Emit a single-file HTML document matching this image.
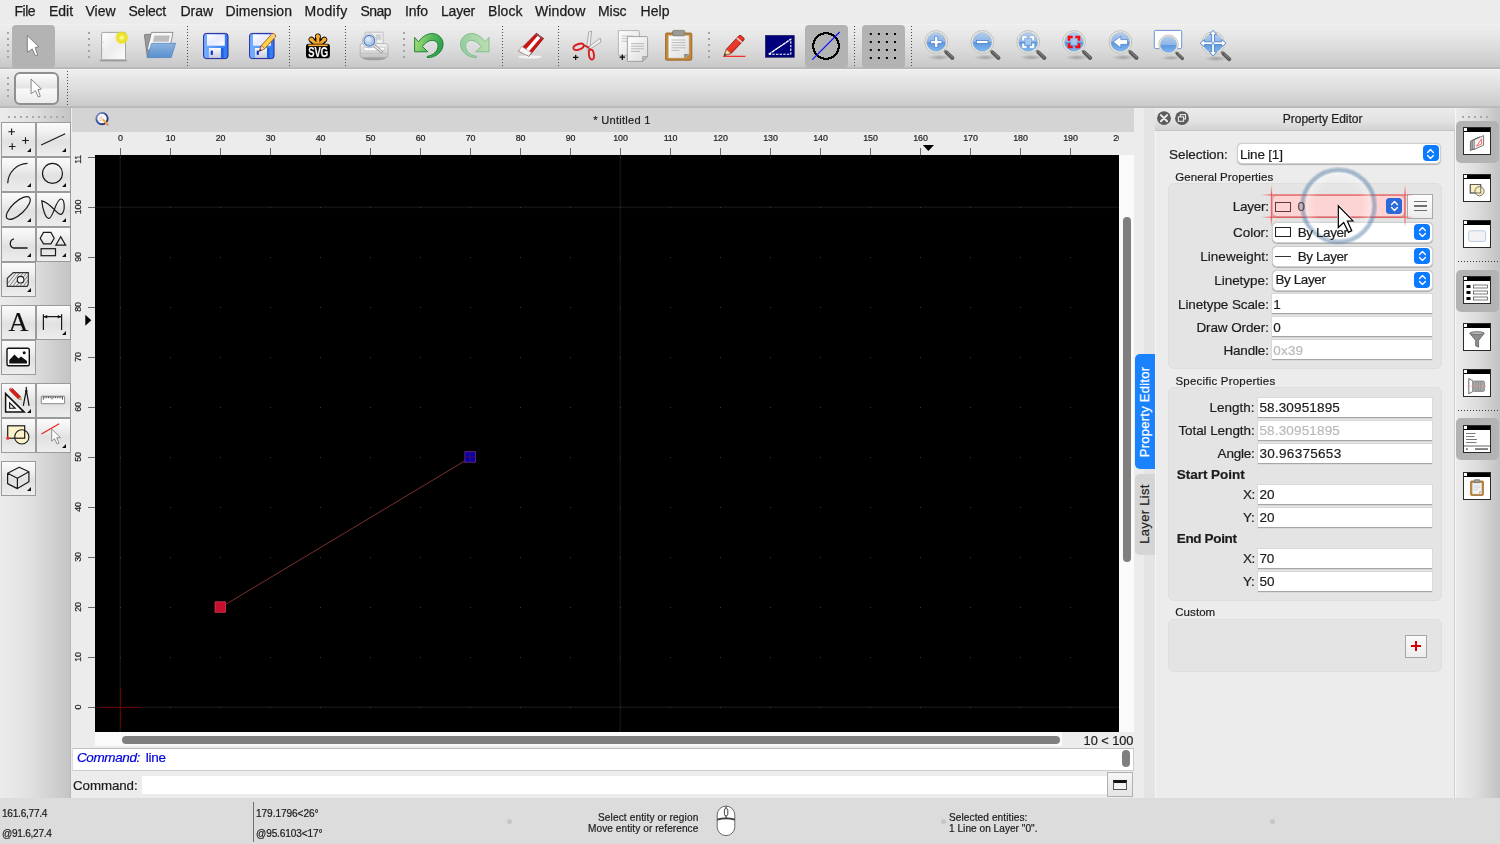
<!DOCTYPE html>
<html><head><meta charset="utf-8"><title>QCAD</title>
<style>
html,body{margin:0;padding:0;}
body{width:1500px;height:844px;overflow:hidden;position:relative;background:#ececec;font-family:"Liberation Sans",sans-serif;color:#1a1a1a;}
div,span,svg{position:absolute;box-sizing:border-box;}
.t{white-space:nowrap;color:#1c1c1c;-webkit-text-stroke:0.2px;}
/* top bars */
#menubar{left:0;top:0;width:1500px;height:24px;background:#ececec;}
#tb1{left:0;top:24px;width:1500px;height:45px;background:linear-gradient(#f3f3f3 0,#ededed 1.5px,#e7e7e7 25%,#dadada 58%,#c9c9c9 42.5px,#b9b9b9 43.6px,#b6b6b6 45px);}
#tb2{left:0;top:69px;width:1500px;height:39px;background:linear-gradient(#f6f6f6 0,#eeeeee 1.5px,#e6e6e6 25%,#dadada 58%,#cbcbcb 36.5px,#bababa 37.6px,#b8b8b8 39px);}
.sel{background:#b3b3b3;border-radius:4px;}
.vsep{width:1px;background:repeating-linear-gradient(#4a4a4a 0 1px,transparent 1px 3px);}
.hdl{width:2px;background:repeating-linear-gradient(#a4a4a4 0 2px,transparent 2px 6px);}
/* left dock */
#ldock{left:0;top:108px;width:71px;height:690px;background:linear-gradient(90deg,#ececec 0%,#e2e2e2 40%,#c4c4c4 100%);border-right:1px solid #b8b8b8;}
.tbtn{width:36px;height:36px;border:1px solid #9b9b9b;background:linear-gradient(#fbfbfb 0%,#efefef 30%,#e1e1e1 55%,#ededed 100%);}
.tri{width:0;height:0;border-left:4.5px solid transparent;border-bottom:4.5px solid #111;right:4.2px;bottom:4.3px;}
/* mdi */
#mditab{left:72px;top:108px;width:1062px;height:24px;background:#d4d4d4;}
#rulerh{left:72px;top:132px;width:1062px;height:23px;background:#ececec;}
#rulerv{left:72px;top:155px;width:23px;height:594px;background:#ececec;}
#canvas{left:95px;top:155px;width:1024px;height:577px;background:#000;overflow:hidden;}
#vscroll{left:1119px;top:155px;width:15px;height:577px;background:#fafafa;}
#hscroll{left:95px;top:732px;width:967px;height:14px;background:#fafafa;}
.thumb{background:#7f7f7f;border-radius:4px;}
#hist{left:72px;top:747.8px;width:1062px;height:23.2px;background:#fff;border:1px solid #cdcdcd;border-left-color:#dedede;border-top:1.6px solid #bfbfbf;}
#cmdin{left:141.5px;top:776.2px;width:965px;height:17.8px;background:#fff;}
#cmdbtn{left:1107.3px;top:772.3px;width:25.6px;height:25.2px;border:1px solid #b0b0b0;background:linear-gradient(#f6f6f6,#e4e4e4);}
/* status */
#status{left:0;top:797.5px;width:1500px;height:46.5px;background:#dcdcdc;}
.dot{width:5px;height:5px;border-radius:3px;background:#c6c6c6;}
/* right dock */
#rgap{left:1134px;top:108px;width:21px;height:690px;background:#ececec;}
#rgap2{left:1144px;top:108px;width:11px;height:690px;background:#e4e4e4;}
#ptitle{left:1155px;top:108px;width:300px;height:23px;background:linear-gradient(#ebebeb,#e2e2e2 60%,#d2d2d2);border-bottom:1px solid #c4c4c4;}
#panel{left:1155px;top:131px;width:300px;height:667px;background:#ececec;border-left:1px solid #f5f5f5;border-right:1px solid #cfcfcf;}
.grp{background:#e4e4e4;border:1px solid #dedede;border-radius:6px;}
.combo{background:#fff;border-radius:5px;border:1px solid #cfcfcf;box-shadow:0 0.5px 1px rgba(0,0,0,0.25);}
.cbtn{width:16px;height:16px;border-radius:4px;background:#0a7aff;}
.inp{background:#fff;border:0;border-bottom:1.4px solid #a6a6a6;box-shadow:0 0 0 0.6px #d2d2d2;}
#rtb{left:1455px;top:108px;width:45px;height:690px;background:linear-gradient(90deg,#ebebeb 0%,#dedede 45%,#c2c2c2 100%);border-left:1px solid #f6f6f6;}
.wic{width:28px;height:28px;left:1463px;background:#fff;border:0.8px solid #2a2a2a;}
.wic:before{content:"";position:absolute;left:0;top:0;right:0;height:3.9px;background:#000;}
.wic:after{content:"";position:absolute;left:0.3px;top:0.4px;width:2.8px;height:2.8px;background:#fff;}
.hsep{height:1px;background:repeating-linear-gradient(90deg,#3a3a3a 0 1px,transparent 1px 3px);}
.rl{font-size:8.9px;line-height:12px;color:#222;letter-spacing:-0.15px;}

#texts{will-change:transform;left:0;top:0;width:1500px;height:844px;}

</style></head>
<body>
<div id="menubar"></div>
<div id="tb1"></div>
<div id="tb2"></div>
<!-- toolbar 1 selections / separators -->
<div class="sel" style="left:12px;top:25px;width:43px;height:43px;"></div>
<div class="sel" style="left:805px;top:25px;width:43px;height:43px;"></div>
<div class="sel" style="left:862px;top:25px;width:43px;height:43px;"></div>
<div class="hdl" style="left:7px;top:32px;height:26px;"></div>
<div class="hdl" style="left:88px;top:32px;height:26px;"></div>
<div class="hdl" style="left:403px;top:32px;height:26px;"></div>
<div class="hdl" style="left:708px;top:32px;height:26px;"></div>
<div class="vsep" style="left:187px;top:26px;height:40px;"></div>
<div class="vsep" style="left:289px;top:26px;height:40px;"></div>
<div class="vsep" style="left:345px;top:26px;height:40px;"></div>
<div class="vsep" style="left:502px;top:26px;height:40px;"></div>
<div class="vsep" style="left:558px;top:26px;height:40px;"></div>
<div class="vsep" style="left:854px;top:26px;height:40px;"></div>
<div class="vsep" style="left:911px;top:26px;height:40px;"></div>
<!-- toolbar 2 -->
<div class="hdl" style="left:7px;top:77px;height:20px;"></div>
<div style="left:14px;top:72px;width:45px;height:33px;border:2px solid #8f8f8f;border-radius:6px;background:linear-gradient(#fdfdfd 0%,#e4e4e4 46%,#f8f8f8 54%,#ececec 100%);"></div>
<div class="vsep" style="left:67px;top:71px;height:34px;"></div>

<!-- left dock -->
<div id="ldock"></div>
<div style="left:7.5px;top:116px;width:58px;height:2px;background:repeating-linear-gradient(90deg,#a8a8a8 0 2px,transparent 2px 6px);"></div>

<!-- mdi area -->
<div id="mditab"></div>
<div id="rulerh"></div>
<div id="rulerv"></div>
<div id="canvas"></div>
<div id="vscroll"><div class="thumb" style="left:4px;top:62px;width:7.5px;height:345px;"></div></div>
<div id="hscroll"><div class="thumb" style="left:27px;top:4px;width:938px;height:8px;"></div></div>
<div id="hist"></div>
<div class="thumb" style="left:1122.3px;top:750px;width:7.8px;height:17px;"></div>
<div id="cmdin"></div>
<div id="cmdbtn"><div style="left:5px;top:7px;width:14px;height:10px;border:1px solid #555;border-top:3px solid #111;background:#f2f2f2;"></div></div>

<!-- right dock -->
<div id="rgap"></div><div id="rgap2"></div>
<div id="ptitle"></div>
<div id="panel"></div>
<div id="rtb"></div>

<!-- status bar -->
<div id="status"></div>
<div style="left:253px;top:802px;width:1px;height:40px;background:#6e6e6e;"></div>
<div class="dot" style="left:507px;top:819px;"></div>
<div class="dot" style="left:941px;top:819px;"></div>
<div class="dot" style="left:1270px;top:819px;"></div>

<svg style="left:95px;top:132px;" width="1024" height="23" viewBox="95 132 1024 23"><line x1="120.5" y1="148" x2="120.5" y2="155" stroke="#6a6a6a" stroke-width="1"/><line x1="170.5" y1="148" x2="170.5" y2="155" stroke="#6a6a6a" stroke-width="1"/><line x1="220.5" y1="148" x2="220.5" y2="155" stroke="#6a6a6a" stroke-width="1"/><line x1="270.5" y1="148" x2="270.5" y2="155" stroke="#6a6a6a" stroke-width="1"/><line x1="320.5" y1="148" x2="320.5" y2="155" stroke="#6a6a6a" stroke-width="1"/><line x1="370.5" y1="148" x2="370.5" y2="155" stroke="#6a6a6a" stroke-width="1"/><line x1="420.5" y1="148" x2="420.5" y2="155" stroke="#6a6a6a" stroke-width="1"/><line x1="470.5" y1="148" x2="470.5" y2="155" stroke="#6a6a6a" stroke-width="1"/><line x1="520.5" y1="148" x2="520.5" y2="155" stroke="#6a6a6a" stroke-width="1"/><line x1="570.5" y1="148" x2="570.5" y2="155" stroke="#6a6a6a" stroke-width="1"/><line x1="620.5" y1="148" x2="620.5" y2="155" stroke="#6a6a6a" stroke-width="1"/><line x1="670.5" y1="148" x2="670.5" y2="155" stroke="#6a6a6a" stroke-width="1"/><line x1="720.5" y1="148" x2="720.5" y2="155" stroke="#6a6a6a" stroke-width="1"/><line x1="770.5" y1="148" x2="770.5" y2="155" stroke="#6a6a6a" stroke-width="1"/><line x1="820.5" y1="148" x2="820.5" y2="155" stroke="#6a6a6a" stroke-width="1"/><line x1="870.5" y1="148" x2="870.5" y2="155" stroke="#6a6a6a" stroke-width="1"/><line x1="920.5" y1="148" x2="920.5" y2="155" stroke="#6a6a6a" stroke-width="1"/><line x1="970.5" y1="148" x2="970.5" y2="155" stroke="#6a6a6a" stroke-width="1"/><line x1="1020.5" y1="148" x2="1020.5" y2="155" stroke="#6a6a6a" stroke-width="1"/><line x1="1070.5" y1="148" x2="1070.5" y2="155" stroke="#6a6a6a" stroke-width="1"/><line x1="1120.5" y1="148" x2="1120.5" y2="155" stroke="#6a6a6a" stroke-width="1"/><path d="M922.8 145 L934 145 L928.4 151 Z" fill="#000"/></svg>
<div style="left:95px;top:132px;width:1024px;height:16px;overflow:hidden;will-change:transform;"><span class="t rl" style="left:10px;width:31px;top:-0.5px;text-align:center;">0</span><span class="t rl" style="left:60px;width:31px;top:-0.5px;text-align:center;">10</span><span class="t rl" style="left:110px;width:31px;top:-0.5px;text-align:center;">20</span><span class="t rl" style="left:160px;width:31px;top:-0.5px;text-align:center;">30</span><span class="t rl" style="left:210px;width:31px;top:-0.5px;text-align:center;">40</span><span class="t rl" style="left:260px;width:31px;top:-0.5px;text-align:center;">50</span><span class="t rl" style="left:310px;width:31px;top:-0.5px;text-align:center;">60</span><span class="t rl" style="left:360px;width:31px;top:-0.5px;text-align:center;">70</span><span class="t rl" style="left:410px;width:31px;top:-0.5px;text-align:center;">80</span><span class="t rl" style="left:460px;width:31px;top:-0.5px;text-align:center;">90</span><span class="t rl" style="left:510px;width:31px;top:-0.5px;text-align:center;">100</span><span class="t rl" style="left:560px;width:31px;top:-0.5px;text-align:center;">110</span><span class="t rl" style="left:610px;width:31px;top:-0.5px;text-align:center;">120</span><span class="t rl" style="left:660px;width:31px;top:-0.5px;text-align:center;">130</span><span class="t rl" style="left:710px;width:31px;top:-0.5px;text-align:center;">140</span><span class="t rl" style="left:760px;width:31px;top:-0.5px;text-align:center;">150</span><span class="t rl" style="left:810px;width:31px;top:-0.5px;text-align:center;">160</span><span class="t rl" style="left:860px;width:31px;top:-0.5px;text-align:center;">170</span><span class="t rl" style="left:910px;width:31px;top:-0.5px;text-align:center;">180</span><span class="t rl" style="left:960px;width:31px;top:-0.5px;text-align:center;">190</span><span class="t rl" style="left:1010px;width:31px;top:-0.5px;text-align:center;">200</span></div>
<svg style="left:72px;top:155px;" width="23" height="577" viewBox="72 155 23 577"><line x1="88" y1="707.5" x2="95" y2="707.5" stroke="#6a6a6a" stroke-width="1"/><line x1="88" y1="657.5" x2="95" y2="657.5" stroke="#6a6a6a" stroke-width="1"/><line x1="88" y1="607.5" x2="95" y2="607.5" stroke="#6a6a6a" stroke-width="1"/><line x1="88" y1="557.5" x2="95" y2="557.5" stroke="#6a6a6a" stroke-width="1"/><line x1="88" y1="507.5" x2="95" y2="507.5" stroke="#6a6a6a" stroke-width="1"/><line x1="88" y1="457.5" x2="95" y2="457.5" stroke="#6a6a6a" stroke-width="1"/><line x1="88" y1="407.5" x2="95" y2="407.5" stroke="#6a6a6a" stroke-width="1"/><line x1="88" y1="357.5" x2="95" y2="357.5" stroke="#6a6a6a" stroke-width="1"/><line x1="88" y1="307.5" x2="95" y2="307.5" stroke="#6a6a6a" stroke-width="1"/><line x1="88" y1="257.5" x2="95" y2="257.5" stroke="#6a6a6a" stroke-width="1"/><line x1="88" y1="207.5" x2="95" y2="207.5" stroke="#6a6a6a" stroke-width="1"/><line x1="88" y1="157.5" x2="95" y2="157.5" stroke="#6a6a6a" stroke-width="1"/><path d="M85.3 314.7 L85.3 325.7 L91.3 320.2 Z" fill="#000"/></svg>
<div style="left:72px;top:155px;width:16px;height:577px;overflow:hidden;will-change:transform;"><span class="t rl" style="left:-10.4px;width:31px;top:546px;text-align:center;transform:rotate(-90deg);">0</span><span class="t rl" style="left:-10.4px;width:31px;top:496px;text-align:center;transform:rotate(-90deg);">10</span><span class="t rl" style="left:-10.4px;width:31px;top:446px;text-align:center;transform:rotate(-90deg);">20</span><span class="t rl" style="left:-10.4px;width:31px;top:396px;text-align:center;transform:rotate(-90deg);">30</span><span class="t rl" style="left:-10.4px;width:31px;top:346px;text-align:center;transform:rotate(-90deg);">40</span><span class="t rl" style="left:-10.4px;width:31px;top:296px;text-align:center;transform:rotate(-90deg);">50</span><span class="t rl" style="left:-10.4px;width:31px;top:246px;text-align:center;transform:rotate(-90deg);">60</span><span class="t rl" style="left:-10.4px;width:31px;top:196px;text-align:center;transform:rotate(-90deg);">70</span><span class="t rl" style="left:-10.4px;width:31px;top:146px;text-align:center;transform:rotate(-90deg);">80</span><span class="t rl" style="left:-10.4px;width:31px;top:96px;text-align:center;transform:rotate(-90deg);">90</span><span class="t rl" style="left:-10.4px;width:31px;top:46px;text-align:center;transform:rotate(-90deg);">100</span><span class="t rl" style="left:-10.4px;width:31px;top:-4px;text-align:center;transform:rotate(-90deg);">110</span></div>
<svg style="left:95px;top:155px;" width="1024" height="577" viewBox="95 155 1024 577" shape-rendering="crispEdges"><rect x="119.5" y="155" width="1.6" height="577" fill="#121212" shape-rendering="auto"/><rect x="619.5" y="155" width="1.6" height="577" fill="#121212" shape-rendering="auto"/><rect x="95" y="206.5" width="1024" height="1.6" fill="#121212" shape-rendering="auto"/><rect x="95" y="706.5" width="1024" height="1.6" fill="#121212" shape-rendering="auto"/><path d="M120 707h1v1h-1zM120 657h1v1h-1zM120 607h1v1h-1zM120 557h1v1h-1zM120 507h1v1h-1zM120 457h1v1h-1zM120 407h1v1h-1zM120 357h1v1h-1zM120 307h1v1h-1zM120 257h1v1h-1zM120 207h1v1h-1zM120 157h1v1h-1zM170 707h1v1h-1zM170 657h1v1h-1zM170 607h1v1h-1zM170 557h1v1h-1zM170 507h1v1h-1zM170 457h1v1h-1zM170 407h1v1h-1zM170 357h1v1h-1zM170 307h1v1h-1zM170 257h1v1h-1zM170 207h1v1h-1zM170 157h1v1h-1zM220 707h1v1h-1zM220 657h1v1h-1zM220 607h1v1h-1zM220 557h1v1h-1zM220 507h1v1h-1zM220 457h1v1h-1zM220 407h1v1h-1zM220 357h1v1h-1zM220 307h1v1h-1zM220 257h1v1h-1zM220 207h1v1h-1zM220 157h1v1h-1zM270 707h1v1h-1zM270 657h1v1h-1zM270 607h1v1h-1zM270 557h1v1h-1zM270 507h1v1h-1zM270 457h1v1h-1zM270 407h1v1h-1zM270 357h1v1h-1zM270 307h1v1h-1zM270 257h1v1h-1zM270 207h1v1h-1zM270 157h1v1h-1zM320 707h1v1h-1zM320 657h1v1h-1zM320 607h1v1h-1zM320 557h1v1h-1zM320 507h1v1h-1zM320 457h1v1h-1zM320 407h1v1h-1zM320 357h1v1h-1zM320 307h1v1h-1zM320 257h1v1h-1zM320 207h1v1h-1zM320 157h1v1h-1zM370 707h1v1h-1zM370 657h1v1h-1zM370 607h1v1h-1zM370 557h1v1h-1zM370 507h1v1h-1zM370 457h1v1h-1zM370 407h1v1h-1zM370 357h1v1h-1zM370 307h1v1h-1zM370 257h1v1h-1zM370 207h1v1h-1zM370 157h1v1h-1zM420 707h1v1h-1zM420 657h1v1h-1zM420 607h1v1h-1zM420 557h1v1h-1zM420 507h1v1h-1zM420 457h1v1h-1zM420 407h1v1h-1zM420 357h1v1h-1zM420 307h1v1h-1zM420 257h1v1h-1zM420 207h1v1h-1zM420 157h1v1h-1zM470 707h1v1h-1zM470 657h1v1h-1zM470 607h1v1h-1zM470 557h1v1h-1zM470 507h1v1h-1zM470 457h1v1h-1zM470 407h1v1h-1zM470 357h1v1h-1zM470 307h1v1h-1zM470 257h1v1h-1zM470 207h1v1h-1zM470 157h1v1h-1zM520 707h1v1h-1zM520 657h1v1h-1zM520 607h1v1h-1zM520 557h1v1h-1zM520 507h1v1h-1zM520 457h1v1h-1zM520 407h1v1h-1zM520 357h1v1h-1zM520 307h1v1h-1zM520 257h1v1h-1zM520 207h1v1h-1zM520 157h1v1h-1zM570 707h1v1h-1zM570 657h1v1h-1zM570 607h1v1h-1zM570 557h1v1h-1zM570 507h1v1h-1zM570 457h1v1h-1zM570 407h1v1h-1zM570 357h1v1h-1zM570 307h1v1h-1zM570 257h1v1h-1zM570 207h1v1h-1zM570 157h1v1h-1zM620 707h1v1h-1zM620 657h1v1h-1zM620 607h1v1h-1zM620 557h1v1h-1zM620 507h1v1h-1zM620 457h1v1h-1zM620 407h1v1h-1zM620 357h1v1h-1zM620 307h1v1h-1zM620 257h1v1h-1zM620 207h1v1h-1zM620 157h1v1h-1zM670 707h1v1h-1zM670 657h1v1h-1zM670 607h1v1h-1zM670 557h1v1h-1zM670 507h1v1h-1zM670 457h1v1h-1zM670 407h1v1h-1zM670 357h1v1h-1zM670 307h1v1h-1zM670 257h1v1h-1zM670 207h1v1h-1zM670 157h1v1h-1zM720 707h1v1h-1zM720 657h1v1h-1zM720 607h1v1h-1zM720 557h1v1h-1zM720 507h1v1h-1zM720 457h1v1h-1zM720 407h1v1h-1zM720 357h1v1h-1zM720 307h1v1h-1zM720 257h1v1h-1zM720 207h1v1h-1zM720 157h1v1h-1zM770 707h1v1h-1zM770 657h1v1h-1zM770 607h1v1h-1zM770 557h1v1h-1zM770 507h1v1h-1zM770 457h1v1h-1zM770 407h1v1h-1zM770 357h1v1h-1zM770 307h1v1h-1zM770 257h1v1h-1zM770 207h1v1h-1zM770 157h1v1h-1zM820 707h1v1h-1zM820 657h1v1h-1zM820 607h1v1h-1zM820 557h1v1h-1zM820 507h1v1h-1zM820 457h1v1h-1zM820 407h1v1h-1zM820 357h1v1h-1zM820 307h1v1h-1zM820 257h1v1h-1zM820 207h1v1h-1zM820 157h1v1h-1zM870 707h1v1h-1zM870 657h1v1h-1zM870 607h1v1h-1zM870 557h1v1h-1zM870 507h1v1h-1zM870 457h1v1h-1zM870 407h1v1h-1zM870 357h1v1h-1zM870 307h1v1h-1zM870 257h1v1h-1zM870 207h1v1h-1zM870 157h1v1h-1zM920 707h1v1h-1zM920 657h1v1h-1zM920 607h1v1h-1zM920 557h1v1h-1zM920 507h1v1h-1zM920 457h1v1h-1zM920 407h1v1h-1zM920 357h1v1h-1zM920 307h1v1h-1zM920 257h1v1h-1zM920 207h1v1h-1zM920 157h1v1h-1zM970 707h1v1h-1zM970 657h1v1h-1zM970 607h1v1h-1zM970 557h1v1h-1zM970 507h1v1h-1zM970 457h1v1h-1zM970 407h1v1h-1zM970 357h1v1h-1zM970 307h1v1h-1zM970 257h1v1h-1zM970 207h1v1h-1zM970 157h1v1h-1zM1020 707h1v1h-1zM1020 657h1v1h-1zM1020 607h1v1h-1zM1020 557h1v1h-1zM1020 507h1v1h-1zM1020 457h1v1h-1zM1020 407h1v1h-1zM1020 357h1v1h-1zM1020 307h1v1h-1zM1020 257h1v1h-1zM1020 207h1v1h-1zM1020 157h1v1h-1zM1070 707h1v1h-1zM1070 657h1v1h-1zM1070 607h1v1h-1zM1070 557h1v1h-1zM1070 507h1v1h-1zM1070 457h1v1h-1zM1070 407h1v1h-1zM1070 357h1v1h-1zM1070 307h1v1h-1zM1070 257h1v1h-1zM1070 207h1v1h-1zM1070 157h1v1h-1z" fill="#3a3a3a"/><line x1="100" y1="707.5" x2="140" y2="707.5" stroke="#6a0000"/><line x1="120.5" y1="687" x2="120.5" y2="727" stroke="#6a0000"/></svg>
<svg style="left:95px;top:155px;" width="1024" height="577" viewBox="95 155 1024 577"><line x1="220.5" y1="607.5" x2="470.5" y2="457.5" stroke="#7d2f2f" stroke-width="1"/><rect x="215.0" y="601.8" width="10.5" height="10.5" fill="#c8102e" stroke="#d8405a" stroke-width="0.7"/><rect x="464.9" y="451.7" width="10.5" height="10.5" fill="#0000a8" stroke="#7a2a8a" stroke-width="0.8"/><path d="M470.2 452V462M465 457H475.3" stroke="#5a1050" stroke-width="0.8" fill="none"/></svg>
<div style="left:1135px;top:354px;width:20px;height:115px;background:#1a83fb;border-radius:5px 0 0 5px;"></div>
<div style="left:1135px;top:474px;width:20px;height:81px;background:#d5d5d5;border-radius:5px 0 0 5px;"></div>
<span class="t" style="left:1145px;top:411.5px;font-size:13px;line-height:18px;color:#fff;transform:translate(-50%,-50%) rotate(-90deg);letter-spacing:0.25px;" id="vt1">Property Editor</span>
<span class="t" style="left:1145px;top:513.5px;font-size:13px;line-height:18px;color:#222;transform:translate(-50%,-50%) rotate(-90deg);letter-spacing:0.3px;" id="vt2">Layer List</span>
<svg style="left:1156px;top:110px;" width="36" height="17" viewBox="1156 110 36 17">
<circle cx="1164" cy="118.2" r="6.9" fill="#5b5b5b"/>
<path d="M1160.9 115.1L1167.1 121.3M1167.1 115.1L1160.9 121.3" stroke="#ececec" stroke-width="2" stroke-linecap="round"/>
<circle cx="1182" cy="118.2" r="6.9" fill="#5b5b5b"/>
<rect x="1180.3" y="114.6" width="5.2" height="4.4" fill="none" stroke="#ececec" stroke-width="1.1"/>
<rect x="1178.4" y="116.9" width="5.2" height="4.4" fill="#5b5b5b" stroke="#ececec" stroke-width="1.1"/>
</svg>
<div class="combo" style="left:1236.5px;top:142.8px;width:204px;height:21.2px;"></div>
<div class="cbtn" style="left:1422.5px;top:145.4px;"><svg style="left:3.5px;top:2.2px;" width="9" height="12" viewBox="0 0 9 12"><path d="M1.6 4.4L4.5 1.6L7.4 4.4M1.6 7.6L4.5 10.4L7.4 7.6" fill="none" stroke="#fff" stroke-width="1.4" stroke-linecap="round" stroke-linejoin="round"/></svg></div>
<div class="grp" style="left:1167.8px;top:183px;width:273.9px;height:186px;"></div>
<div class="grp" style="left:1167.8px;top:387px;width:273.9px;height:213.5px;"></div>
<div class="grp" style="left:1167.8px;top:619px;width:273.9px;height:53px;"></div>
<div class="combo" style="left:1271.5px;top:195px;width:133.5px;height:22px;"></div>
<div class="cbtn" style="left:1386px;top:198.0px;"><svg style="left:3.5px;top:2.2px;" width="9" height="12" viewBox="0 0 9 12"><path d="M1.6 4.4L4.5 1.6L7.4 4.4M1.6 7.6L4.5 10.4L7.4 7.6" fill="none" stroke="#fff" stroke-width="1.4" stroke-linecap="round" stroke-linejoin="round"/></svg></div>
<div class="combo" style="left:1271.5px;top:222px;width:161px;height:20.5px;"></div>
<div class="cbtn" style="left:1414px;top:224.25px;"><svg style="left:3.5px;top:2.2px;" width="9" height="12" viewBox="0 0 9 12"><path d="M1.6 4.4L4.5 1.6L7.4 4.4M1.6 7.6L4.5 10.4L7.4 7.6" fill="none" stroke="#fff" stroke-width="1.4" stroke-linecap="round" stroke-linejoin="round"/></svg></div>
<div class="combo" style="left:1271.5px;top:246px;width:161px;height:20.5px;"></div>
<div class="cbtn" style="left:1414px;top:248.25px;"><svg style="left:3.5px;top:2.2px;" width="9" height="12" viewBox="0 0 9 12"><path d="M1.6 4.4L4.5 1.6L7.4 4.4M1.6 7.6L4.5 10.4L7.4 7.6" fill="none" stroke="#fff" stroke-width="1.4" stroke-linecap="round" stroke-linejoin="round"/></svg></div>
<div class="combo" style="left:1271.5px;top:270px;width:161px;height:20.5px;"></div>
<div class="cbtn" style="left:1414px;top:272.25px;"><svg style="left:3.5px;top:2.2px;" width="9" height="12" viewBox="0 0 9 12"><path d="M1.6 4.4L4.5 1.6L7.4 4.4M1.6 7.6L4.5 10.4L7.4 7.6" fill="none" stroke="#fff" stroke-width="1.4" stroke-linecap="round" stroke-linejoin="round"/></svg></div>
<div style="left:1275px;top:201.5px;width:16px;height:10px;border:1px solid #222;background:#fff;"></div>
<div style="left:1275px;top:227.3px;width:16px;height:10px;border:1px solid #222;background:#fff;"></div>
<div style="left:1275px;top:256px;width:16px;height:1px;background:#333;"></div>
<div style="left:1407px;top:193.5px;width:26px;height:25.5px;border:1px solid #a9a9a9;background:linear-gradient(#fdfdfd,#ececec);"></div>
<div style="left:1413.5px;top:200.7px;width:13px;height:1.5px;background:#707070;"></div>
<div style="left:1413.5px;top:205.2px;width:13px;height:1.5px;background:#707070;"></div>
<div style="left:1413.5px;top:209.7px;width:13px;height:1.5px;background:#707070;"></div>
<div class="inp" style="left:1271.8px;top:294px;width:160.4px;height:19.5px;"></div>
<div class="inp" style="left:1271.8px;top:317px;width:160.4px;height:19.5px;"></div>
<div class="inp" style="left:1271.8px;top:340px;width:160.4px;height:19.5px;"></div>
<div class="inp" style="left:1257.8px;top:398px;width:174.4px;height:19.5px;"></div>
<div class="inp" style="left:1257.8px;top:421px;width:174.4px;height:19.5px;"></div>
<div class="inp" style="left:1257.8px;top:444px;width:174.4px;height:19.5px;"></div>
<div class="inp" style="left:1257.8px;top:485px;width:174.4px;height:19.5px;"></div>
<div class="inp" style="left:1257.8px;top:508px;width:174.4px;height:19.5px;"></div>
<div class="inp" style="left:1257.8px;top:549px;width:174.4px;height:19.5px;"></div>
<div class="inp" style="left:1257.8px;top:572px;width:174.4px;height:19.5px;"></div>
<div style="left:1405px;top:635px;width:22px;height:22.5px;border:1px solid #a6a6a6;background:linear-gradient(#fafafa,#ededed);"></div>
<div style="left:1411.2px;top:644.9px;width:9.6px;height:2.5px;background:#d20000;"></div><div style="left:1414.75px;top:641.3px;width:2.5px;height:9.6px;background:#d20000;"></div>
<div style="left:1271.5px;top:195px;width:133.5px;height:22px;background:rgba(250,110,110,0.30);"></div>
<svg style="left:1255px;top:180px;" width="170" height="55" viewBox="1255 180 170 55">
<defs><linearGradient id="fh" x1="0" x2="1"><stop offset="0" stop-color="#f04545" stop-opacity="0"/><stop offset="0.07" stop-color="#f04545" stop-opacity="0.8"/><stop offset="0.93" stop-color="#f04545" stop-opacity="0.8"/><stop offset="1" stop-color="#f04545" stop-opacity="0"/></linearGradient>
<linearGradient id="fv" x1="0" x2="0" y1="0" y2="1"><stop offset="0" stop-color="#f04545" stop-opacity="0"/><stop offset="0.2" stop-color="#f04545" stop-opacity="0.8"/><stop offset="0.8" stop-color="#f04545" stop-opacity="0.8"/><stop offset="1" stop-color="#f04545" stop-opacity="0"/></linearGradient></defs>
<rect x="1261" y="194.3" width="153" height="1.3" fill="url(#fh)"/>
<rect x="1261" y="216.6" width="153" height="1.3" fill="url(#fh)"/>
<rect x="1270.8" y="185" width="1.3" height="42" fill="url(#fv)"/>
<rect x="1404.4" y="185" width="1.3" height="42" fill="url(#fv)"/>
</svg>
<div class="tbtn" style="left:1px;top:122px;width:35px;height:35px;"><div class="tri"></div></div>
<div class="tbtn" style="left:36px;top:122px;width:35px;height:35px;"><div class="tri"></div></div>
<div class="tbtn" style="left:1px;top:157px;width:35px;height:35px;"><div class="tri"></div></div>
<div class="tbtn" style="left:36px;top:157px;width:35px;height:35px;"><div class="tri"></div></div>
<div class="tbtn" style="left:1px;top:192px;width:35px;height:35px;"><div class="tri"></div></div>
<div class="tbtn" style="left:36px;top:192px;width:35px;height:35px;"><div class="tri"></div></div>
<div class="tbtn" style="left:1px;top:227px;width:35px;height:35px;"><div class="tri"></div></div>
<div class="tbtn" style="left:36px;top:227px;width:35px;height:35px;"><div class="tri"></div></div>
<div class="tbtn" style="left:1px;top:262px;width:35px;height:35px;"><div class="tri"></div></div>
<div class="tbtn" style="left:1px;top:305px;width:35px;height:35px;"></div>
<div class="tbtn" style="left:36px;top:305px;width:35px;height:35px;"><div class="tri"></div></div>
<div class="tbtn" style="left:1px;top:340px;width:35px;height:35px;"></div>
<div class="tbtn" style="left:1px;top:383px;width:35px;height:35px;"><div class="tri"></div></div>
<div class="tbtn" style="left:36px;top:383px;width:35px;height:35px;"></div>
<div class="tbtn" style="left:1px;top:418px;width:35px;height:35px;"></div>
<div class="tbtn" style="left:36px;top:418px;width:35px;height:35px;"><div class="tri"></div></div>
<div class="tbtn" style="left:1px;top:461px;width:35px;height:35px;"><div class="tri"></div></div>
<div class="cbtn" style="left:1386px;top:198px;background:#2d6ad9;"><svg style="left:3.5px;top:2.2px;" width="9" height="12" viewBox="0 0 9 12"><path d="M1.6 4.4L4.5 1.6L7.4 4.4M1.6 7.6L4.5 10.4L7.4 7.6" fill="none" stroke="#fff" stroke-width="1.4" stroke-linecap="round" stroke-linejoin="round"/></svg></div>
<svg style="left:0;top:108px;" width="72" height="400" viewBox="0 108 72 400" fill="none" stroke="#1a1a1a" stroke-width="1.1" stroke-linecap="butt">
<!-- points -->
<path d="M8.3 131.7h6.6M11.6 128.4v6.6 M22.2 140.5h6.6M25.5 137.2v6.6 M8.9 146.5h6.6M12.2 143.2v6.6"/>
<!-- line -->
<path d="M41.2 145L65.2 133.8" stroke-width="1.2"/>
<!-- arc -->
<path d="M7.7 183.2A20.5 20.5 0 0 1 27.5 163.4" stroke-width="1.2"/>
<!-- circle -->
<circle cx="52.5" cy="173.4" r="10" stroke-width="1.2"/>
<!-- ellipse -->
<ellipse cx="18.3" cy="208" rx="15.3" ry="6.2" transform="rotate(-43 18.3 208)" stroke-width="1.2"/>
<!-- spline -->
<path d="M41.8 200.8C42.5 209 45.5 218.5 49 218.3C53.5 218 55.5 199.5 61 199C64.8 198.8 65.2 210 62.3 213.5C58.5 218 52.5 203.5 41.8 200.8Z" stroke-width="1.2"/>
<!-- polyline hook -->
<path d="M13.9 238.9A4.8 4.8 0 0 0 13.3 248L27.6 248" stroke-width="1.3"/>
<!-- shapes -->
<path d="M40.2 238.2L43.5 232.4L50.9 232.4L54.2 238.2L50.9 243.9L43.5 243.9Z" stroke-width="1.2"/>
<path d="M55.8 245.2L60.7 236.8L65.6 245.2Z" stroke-width="1.2"/>
<rect x="41.1" y="248.7" width="14.4" height="7" stroke-width="1.2"/>
<!-- hatch -->
<path d="M7.3 286.3V278.3L13.3 272.6H28.3V284.1L27.1 286.3Z" fill="#e9e9e9" stroke="#333" stroke-width="1.2"/>
<path d="M8 283L16 273M9.5 286L19.5 273M13 286L23 273M16.5 286L26.5 273M20 286L28 275.5M23.5 286L28 280" stroke="#555" stroke-width="0.7"/>
<circle cx="20.6" cy="279.7" r="3.3" fill="#f4f4f4" stroke="#222" stroke-width="1.1"/>
<!-- dimension -->
<path d="M43.4 314.2V330M61.6 314.2V330M43.4 316.7H61.6" stroke-width="1.2"/>
<path d="M43.6 316.7L47.2 315V318.4ZM61.4 316.7L57.8 315V318.4Z" fill="#111" stroke="none"/>
<!-- image -->
<rect x="7" y="348.3" width="22.3" height="17.4" rx="1.5" fill="#fff" stroke="#111" stroke-width="1.4"/>
<path d="M9.3 363.5V360L14.5 354.5L18.5 358.5L21 356.5L27 361V363.5Z" fill="#111" stroke="none"/>
<circle cx="24.2" cy="352.8" r="1.5" fill="#111" stroke="none"/>
<!-- modify: set square + pencil + compass -->
<path d="M5.600 393.600V412.100H24.200Z" fill="#fbfbfb" stroke="#111" stroke-width="1.500" stroke-linejoin="miter"/>
<path d="M9.600 402.900V408.300H15.200Z" fill="#f0f0f0" stroke="#111" stroke-width="1.100"/>
<path d="M9.400 389.800Q9.300 388.300 10.900 388.100Q12 388 12.600 388.600L20.600 396.500L18.200 398.900L10 390.800Q9.500 390.300 9.400 389.800Z" fill="#d6201a" stroke="#8a1410" stroke-width="0.500"/>
<path d="M10.300 389.200L11.600 388.500" stroke="#ffb0a8" stroke-width="0.900" stroke-linecap="round"/>
<path d="M18.200 398.900L20.600 396.500L21.400 399.700Z" fill="#e0b478" stroke="#6b4a1e" stroke-width="0.400"/>
<path d="M26.300 387.400V390.300M26 391.600L23.400 405.300M26.600 391.600L29 405.300" stroke="#111" stroke-width="1.200" stroke-linecap="round"/>
<circle cx="26.300" cy="391" r="1.200" fill="#111" stroke="none"/>
<!-- ruler -->
<rect x="41.300" y="396.200" width="23.300" height="7.500" rx="0.600" fill="#fff" stroke="#7d7d7d" stroke-width="0.900"/>
<path d="M43.300 396.400v3.200M45.050 396.400v1.800M46.800 396.400v1.800M48.550 396.400v1.800M50.300 396.400v1.800M52.050 396.400v3M53.800 396.400v1.800M55.550 396.400v1.800M57.300 396.400v1.800M59.050 396.400v1.800M60.800 396.400v1.800M62.550 396.400v3.200" stroke="#222" stroke-width="0.800"/>
<!-- projection -->
<rect x="7.700" y="425.800" width="17" height="12.400" fill="#fdf3cb" stroke="none"/>
<circle cx="21.800" cy="436.900" r="7.100" fill="#fdf3cb" stroke="#1a1a1a" stroke-width="1.100"/>
<rect x="7.700" y="425.800" width="17" height="12.400" fill="none" stroke="#1a1a1a" stroke-width="1.200"/>
<circle cx="7.800" cy="438.200" r="1.600" fill="#ff2a2a" stroke="none"/>
<!-- select: red line + cursor -->
<path d="M41.5 433.9L59.2 423.7" stroke="#ee2222" stroke-width="1.2"/>
<path d="M51.7 429V441.2L54.6 438.6L57 444L59 443.1L56.7 437.8L60.4 437.6Z" fill="#fafafa" stroke="#777" stroke-width="0.8"/>
<!-- cube -->
<path d="M7.6 473.3L19.2 467.2L28.9 471.8L17.4 478.2ZM7.6 473.3V483.6L17.4 488.6V478.2M17.4 488.6L28.9 481.8V471.8" stroke-width="1.2" stroke-linejoin="round"/>
</svg>
<span class="t" style="left:8px;top:308px;width:21px;text-align:center;font-family:'Liberation Serif',serif;font-size:27.5px;line-height:28px;color:#111;will-change:transform;">A</span>

<!-- status bar mouse icon -->
<svg style="left:714px;top:803px;" width="24" height="36" viewBox="714 803 24 36" fill="none">
<rect x="717.200" y="806.100" width="17.600" height="29.500" rx="8.800" fill="#fff" stroke="#5a5a5a" stroke-width="0.9"/>
<path d="M717.200 819.700Q726 817.100 734.800 819.700" stroke="#3c3c3c" stroke-width="1.900"/>
<path d="M726.050 806.200V808.600M726.050 815.700V818.300" stroke="#444" stroke-width="1.300"/>
<rect x="724.400" y="808.600" width="3.400" height="7.100" rx="1.500" fill="#fff" stroke="#444" stroke-width="1"/>
</svg>
<!-- MDI tab icon (Q with pencil) -->
<svg style="left:92px;top:109px;" width="20" height="20" viewBox="92 109 20 20" fill="none">
<defs><linearGradient id="gQ" x1="0" y1="0" x2="1" y2="1"><stop offset="0" stop-color="#9aa8d8"/><stop offset="0.4" stop-color="#3a4f9c"/><stop offset="1" stop-color="#1e2f7a"/></linearGradient></defs>
<circle cx="102" cy="118.600" r="5.700" fill="#f6f6f6" stroke="url(#gQ)" stroke-width="1.900"/>
<path d="M99 118.300h2.600M101.400 116v3.400M98.600 120.400h3" stroke="#c9a0a0" stroke-width="0.500"/>
<path d="M102.600 119.200L107 124" stroke="#f5a623" stroke-width="1.900" stroke-linecap="butt"/>
<path d="M102.100 118.600L103.600 119.100L102.800 120.300Z" fill="#f6e6b0"/>
<circle cx="107.500" cy="124.500" r="1.100" fill="#e8706a"/>
</svg>

<!-- right toolbar -->
<div style="left:1462px;top:116px;width:26px;height:2px;background:repeating-linear-gradient(90deg,#a8a8a8 0 2px,transparent 2px 6px);"></div>
<div class="sel" style="left:1456px;top:120.5px;width:43.2px;height:42px;border-radius:5px;"></div>
<div class="sel" style="left:1456px;top:269.5px;width:43.2px;height:42px;border-radius:5px;"></div>
<div class="sel" style="left:1456px;top:417.5px;width:43.2px;height:42.5px;border-radius:5px;"></div>
<div class="hsep" style="left:1458px;top:261px;width:42px;"></div>
<div class="hsep" style="left:1458px;top:410px;width:42px;"></div>
<div class="wic" style="top:127px;"></div>
<div class="wic" style="top:174px;"></div>
<div class="wic" style="top:220px;"></div>
<div class="wic" style="top:276px;"></div>
<div class="wic" style="top:323px;"></div>
<div class="wic" style="top:369px;"></div>
<div class="wic" style="top:425px;"></div>
<div class="wic" style="top:472px;"></div>
<svg style="left:1455px;top:108px;" width="45" height="400" viewBox="1455 108 45 400" fill="none">
<!-- 1: block list (layered sheets w/ red triangle) -->
<path d="M1470.4 141.3L1478 137.6V146.8L1470.4 150.6Z" fill="#bdbdbd" stroke="#444" stroke-width="0.7"/>
<path d="M1472.2 140.5L1479.8 136.8V146L1472.2 149.8Z" fill="#d6d6d6" stroke="#444" stroke-width="0.7"/>
<path d="M1474.2 139.8L1483.6 135.6V145.2L1474.2 149.4Z" fill="#f4f4f4" stroke="#444" stroke-width="0.7"/>
<path d="M1476.6 146.2L1481.6 138.8V144Z" stroke="#ff4a4a" stroke-width="0.8"/>
<!-- 2: rect + circle -->
<rect x="1470.2" y="184.6" width="10.6" height="8.4" fill="#fbeec0" stroke="#555" stroke-width="0.8"/>
<circle cx="1479.5" cy="191.2" r="4.6" fill="#fbeec0" stroke="#555" stroke-width="0.8"/>
<rect x="1470.2" y="184.6" width="10.6" height="8.4" fill="none" stroke="#555" stroke-width="0.8"/>
<!-- 3: rounded rect -->
<rect x="1468.6" y="230.8" width="17" height="10.6" rx="2" fill="#f3f3f3" stroke="#b9cbe6" stroke-width="1"/>
<!-- 4: list -->
<rect x="1466.5" y="285" width="4" height="3" fill="#000"/><rect x="1466.5" y="291" width="4" height="3" fill="#000"/><rect x="1466.5" y="297" width="4" height="3" fill="#000"/>
<rect x="1473.5" y="285" width="14" height="3" fill="#fff" stroke="#444" stroke-width="0.7"/><rect x="1473.5" y="291" width="14" height="3" fill="#fff" stroke="#444" stroke-width="0.7"/><rect x="1473.5" y="297" width="14" height="3" fill="#fff" stroke="#444" stroke-width="0.7"/>
<!-- 5: funnel -->
<path d="M1469.8 333.4C1469.8 331.6 1484.2 331.6 1484.2 333.4L1478.6 340.4V347.2L1475.6 345.8V340.4Z" fill="#8d8d8d" stroke="#555" stroke-width="0.7"/>
<ellipse cx="1477" cy="333.2" rx="7.2" ry="1.5" fill="#b5b5b5" stroke="#555" stroke-width="0.6"/>
<!-- 6: bolt/screw -->
<path d="M1468.8 378.5L1473 381V391.4L1468.8 393.8Z" fill="#fff" stroke="#444" stroke-width="0.8"/>
<rect x="1473" y="381" width="11.6" height="10.4" rx="1.5" fill="#a9a9a9" stroke="#666" stroke-width="0.6"/>
<path d="M1476 381v10.4M1478.4 381v10.4M1480.8 381v10.4" stroke="#8a8a8a" stroke-width="0.7"/>
<path d="M1466.6 386.2H1487" stroke="#ff9a9a" stroke-width="0.6" stroke-dasharray="2 1"/>
<!-- 7: command line text -->
<g fill="#7a7a7a"><rect x="1466" y="433" width="9.5" height="1"/><rect x="1466" y="436" width="8.5" height="1"/><rect x="1466" y="439" width="11" height="1"/><rect x="1466" y="442" width="10.5" height="1"/></g>
<path d="M1463.5 446H1490.5" stroke="#222" stroke-width="0.7"/>
<g fill="#444"><rect x="1466" y="448.4" width="1.8" height="1.3"/><rect x="1475" y="448.4" width="13" height="1.3"/></g>
<!-- 8: clipboard -->
<rect x="1470.6" y="481" width="12.8" height="14.4" rx="0.8" fill="#c98a3c" stroke="#8a5a1e" stroke-width="0.7"/>
<rect x="1472.2" y="483" width="9.6" height="11" fill="#f4f4f2" stroke="#bbb" stroke-width="0.4"/>
<rect x="1474.2" y="479.6" width="5.6" height="3" rx="0.8" fill="#9a9a9a" stroke="#666" stroke-width="0.5"/>
<path d="M1473.6 485.8h6.8M1473.6 487.8h6.8M1473.6 489.8h4.6" stroke="#c9c9c9" stroke-width="0.7"/>
<path d="M1479.2 494V491.4H1481.8Z" fill="#aaa"/>
</svg>

<svg style="left:0;top:24px;" width="720" height="84" viewBox="0 24 720 84" fill="none">
<defs>
<linearGradient id="gPage" x1="0" y1="0" x2="1" y2="1"><stop offset="0" stop-color="#ffffff"/><stop offset="0.5" stop-color="#ececec"/><stop offset="1" stop-color="#fdfdfd"/></linearGradient>
<radialGradient id="gSun"><stop offset="0" stop-color="#ffffff"/><stop offset="0.25" stop-color="#f6ef6a"/><stop offset="0.6" stop-color="#ece11a"/><stop offset="0.85" stop-color="#ece11a" stop-opacity="0.75"/><stop offset="1" stop-color="#ece11a" stop-opacity="0"/></radialGradient>
<linearGradient id="gFold" x1="0" y1="0" x2="0" y2="1"><stop offset="0" stop-color="#8db3de"/><stop offset="1" stop-color="#5a90cf"/></linearGradient>
<linearGradient id="gFloppy" x1="0" y1="0" x2="1" y2="0"><stop offset="0" stop-color="#7ab2ff"/><stop offset="0.5" stop-color="#4d93fb"/><stop offset="1" stop-color="#2f7af0"/></linearGradient>
<linearGradient id="gShut" x1="0" y1="0" x2="0" y2="1"><stop offset="0" stop-color="#fafafc"/><stop offset="1" stop-color="#c9c9dc"/></linearGradient>
<linearGradient id="gLabel" x1="0" y1="0" x2="1" y2="1"><stop offset="0" stop-color="#ffffff"/><stop offset="0.5" stop-color="#e8eaff"/><stop offset="1" stop-color="#ffffff"/></linearGradient>
<linearGradient id="gPencil" x1="0" y1="0" x2="1" y2="1"><stop offset="0" stop-color="#ff9d00"/><stop offset="0.5" stop-color="#ffd84a"/><stop offset="1" stop-color="#ffb000"/></linearGradient>
<linearGradient id="gUndo" x1="0" y1="0.3" x2="1" y2="0.6"><stop offset="0" stop-color="#a6de78"/><stop offset="0.5" stop-color="#58ba5c"/><stop offset="1" stop-color="#2a9c46"/></linearGradient>
<linearGradient id="gRedo" x1="0" y1="0.6" x2="1" y2="0.3"><stop offset="0" stop-color="#93cc9f"/><stop offset="0.5" stop-color="#a9d6aa"/><stop offset="1" stop-color="#bcdfae"/></linearGradient>
<linearGradient id="gPrn" x1="0" y1="0" x2="0" y2="1"><stop offset="0" stop-color="#f6f6f6"/><stop offset="1" stop-color="#c2c2c2"/></linearGradient>
<radialGradient id="gLensP" cx="0.4" cy="0.35"><stop offset="0" stop-color="#e8f0fa"/><stop offset="1" stop-color="#a9c4e6"/></radialGradient>
<linearGradient id="gClip" x1="0" y1="0" x2="1" y2="1"><stop offset="0" stop-color="#ffffff"/><stop offset="1" stop-color="#dcdcdc"/></linearGradient>
</defs>
<!-- pointer (selected) -->
<path d="M27.3 35.6V52.2L32.3 48.9L35.5 55.9L37.7 55.2L35.2 47.5L38.8 46.8Z" fill="#fff" stroke="#6a6a6a" stroke-width="0.8" stroke-linejoin="round"/>
<!-- pointer tb2 -->
<path d="M31.1 79.1V93.7L35.4 90.7L38.3 97L40.3 96.3L38 89.6L41.3 89Z" fill="#fff" stroke="#6a6a6a" stroke-width="0.8" stroke-linejoin="round"/>
<!-- new -->
<path d="M100.5 60.6H126.5" stroke="#8c8c8c" stroke-width="1.6" stroke-opacity="0.7" stroke-linecap="round"/>
<rect x="101.6" y="32.4" width="23.9" height="27.4" rx="1.2" fill="url(#gPage)" stroke="#9a9a9a" stroke-width="0.9"/>
<path d="M103 42.3h1.4M103 49.6h1.4" stroke="#c4c4c4" stroke-width="0.7"/>
<circle cx="121.8" cy="37.7" r="6.7" fill="url(#gSun)"/>
<!-- open -->
<path d="M144.4 35.2Q144.3 34.4 145.3 34.4H151L152 36.5H158V56.8H147.3Z" fill="#9a9a9a" stroke="#666" stroke-width="0.7"/>
<path d="M151.4 32.4H173L169.5 50H147.2Z" fill="#f8f8f8" stroke="#7a7a7a" stroke-width="0.8"/>
<path d="M154.4 35.6H170L168.5 41.8H152.8Z" fill="#bdbdbd"/>
<path d="M151.7 43.3H175.6L171.2 57.6H147.5Q146.8 57.6 147.1 56.8Z" fill="url(#gFold)" stroke="#4a7fc0" stroke-width="0.7" stroke-linejoin="round"/>
<!-- save -->
<g id="floppy">
<rect x="203.6" y="33.4" width="24.4" height="25.2" rx="2.6" fill="url(#gFloppy)" stroke="#27279a" stroke-width="1"/>
<rect x="207" y="34.4" width="17.8" height="11.3" fill="url(#gLabel)"/>
<rect x="221" y="48" width="2.6" height="9.8" fill="#1f5fe6"/>
<rect x="208.9" y="48" width="12" height="9.9" fill="url(#gShut)"/>
<rect x="210.7" y="50.6" width="2.2" height="4.4" rx="0.8" fill="#0a32d2"/>
</g>
<!-- save as -->
<use href="#floppy" x="46"/>
<path d="M259.4 51.2L261.4 45.4L272 33.8Q273 32.8 274.2 33.8L275.4 35Q276.3 36 275.3 37.1L264.8 48.7Z" fill="url(#gPencil)" stroke="#a83a10" stroke-width="0.8" stroke-linejoin="round"/>
<path d="M259.4 51.2L261.4 45.4L264.8 48.7Z" fill="#f6e3c8" stroke="#8a3a10" stroke-width="0.6"/>
<path d="M259.4 51.2L260.2 48.9L261.6 50.3Z" fill="#222"/>
<path d="M271.3 34.6L274.6 37.9" stroke="#e8d0c0" stroke-width="1.4"/>
<!-- SVG logo -->
<g stroke="#000" stroke-linecap="round" fill="none"><path d="M317.9 46V36.400" stroke-width="5.800"/><path d="M317.9 46L311.500 39.600" stroke-width="5.800"/><path d="M317.9 46L324.300 39.600" stroke-width="5.800"/></g>
<g stroke="#fbab2c" stroke-linecap="round" fill="none"><path d="M317.9 46V36.400" stroke-width="3.100"/><path d="M317.9 46L311.500 39.600" stroke-width="3.100"/><path d="M317.9 46L324.300 39.600" stroke-width="3.100"/></g>
<circle cx="317.9" cy="36.300" r="2.100" fill="#fbab2c"/><circle cx="311.400" cy="39.500" r="2.100" fill="#fbab2c"/><circle cx="324.400" cy="39.500" r="2.100" fill="#fbab2c"/>
<rect x="306" y="43.800" width="23.900" height="14.400" rx="2.800" fill="#000"/>
<path d="M308.200 45.300H327.700" stroke="#fbab2c" stroke-width="1.700"/>
<!-- print preview -->
<ellipse cx="374" cy="58.400" rx="11.500" ry="1.800" fill="#7a7a7a" fill-opacity="0.6"/>
<rect x="365.200" y="32.200" width="18" height="14" rx="0.800" fill="#f0f0f0" stroke="#b4b4b4" stroke-width="0.800"/>
<rect x="376" y="34.400" width="5.400" height="5.400" fill="#d0d0d0"/>
<path d="M362.200 43.600H385.800Q387.600 43.800 387.900 45.600V56Q387.800 57.600 386 57.600H362Q360.300 57.600 360.200 56V45.600Q360.500 43.800 362.200 43.600Z" fill="url(#gPrn)" stroke="#a9a9a9" stroke-width="0.800"/>
<path d="M363 47.200H385.400L383.600 50.800H364.600Z" fill="#fff" stroke="#b9b9b9" stroke-width="0.600"/>
<path d="M361 53.500H387.500" stroke="#bdbdbd" stroke-width="0.700"/>
<path d="M374.200 45.600L381.400 51.600" stroke="#8a8a8a" stroke-width="3" stroke-linecap="round"/>
<path d="M374.200 45.600L381.400 51.600" stroke="#e6e6e6" stroke-width="1.600" stroke-linecap="round"/>
<circle cx="369.300" cy="40.800" r="7" fill="#f4f4f4" stroke="#a9a9a9" stroke-width="0.700"/>
<circle cx="369.300" cy="40.800" r="5.400" fill="url(#gLensP)" stroke="#4a80c8" stroke-width="1.100"/>
<!-- undo -->
<path d="M414.6 37.4 L418.5 41.9 C422 36.5 427.5 33.5 432 33.5 C438.5 33.5 443.1 38.5 443.1 44 C443.1 51.5 436 57.8 427.2 57.6 L427.3 56.3 C433.5 55.4 438 51 438 45.8 C438 42.5 435.5 40.4 432 40.4 C428.5 40.4 425 43 422.4 46.4 L427.8 51.8 L414.6 51.8 Z" fill="url(#gUndo)" stroke="#127c30" stroke-width="0.9" stroke-linejoin="round"/>
<!-- redo -->
<path d="M 489.0 37.4 L 485.1 41.9 C 481.6 36.5 476.1 33.5 471.6 33.5 C 465.1 33.5 460.5 38.5 460.5 44.0 C 460.5 51.5 467.6 57.8 476.4 57.6 L 476.3 56.3 C 470.1 55.4 465.6 51.0 465.6 45.8 C 465.6 42.5 468.1 40.4 471.6 40.4 C 475.1 40.4 478.6 43.0 481.2 46.4 L 475.8 51.8 L 489.0 51.8 Z" fill="url(#gRedo)" stroke="#78bb8b" stroke-width="0.9" stroke-linejoin="round"/>
<!-- eraser -->
<ellipse cx="530" cy="57" rx="12" ry="1.6" fill="#fff" fill-opacity="0.7"/>
<path d="M536.4 33.2L543.6 38.4L529 56.2L518.6 51.2Z" fill="#cf1212" stroke="#7d0c0c" stroke-width="0.7" stroke-linejoin="round"/>
<path d="M538.6 34.8L541.4 36.8L526 54.8L522.6 53.2Z" fill="#fff"/>
<path d="M521.6 46.4L531.4 52.6L529 56.2L518.6 51.2Z" fill="#f6f6f6" stroke="#999" stroke-width="0.6" stroke-linejoin="round"/>
<path d="M536.4 33.2L543.6 38.4L542.6 39.6L535.4 34.4Z" fill="#8a4a4a"/>
<!-- cut -->
<path d="M591.6 31.2L589.8 47.4L587.8 50.2L586.6 47.4L588.8 31.8Z" fill="#efefef" stroke="#8c8c8c" stroke-width="0.7" stroke-linejoin="round"/>
<path d="M600.2 38.2L590 46L588.2 49.4L591.2 48.2L601 42Z" fill="#efefef" stroke="#8c8c8c" stroke-width="0.7" stroke-linejoin="round"/>
<ellipse cx="578.6" cy="46.8" rx="5.4" ry="2.7" transform="rotate(-20 578.6 46.800)" stroke="#d81e1e" stroke-width="1.9"/>
<ellipse cx="591.4" cy="54.6" rx="2.5" ry="5" transform="rotate(-8 591.4 54.6)" stroke="#d81e1e" stroke-width="1.9"/>
<path d="M583.6 45L589 47.6M589 48.6L590.6 50" stroke="#d81e1e" stroke-width="1.8"/>
<path d="M573 57.4h5.400M575.7 54.7v5.400" stroke="#000" stroke-width="1.1"/>
<!-- copy -->
<path d="M618.400 30.600H638.400Q639.400 30.600 639.400 31.600V55.400H618.400Z" fill="url(#gClip)" stroke="#a8a8a8" stroke-width="0.800"/>
<path d="M621.600 36h12M621.600 38.600h12M621.600 41.200h6" stroke="#b9b9b9" stroke-width="0.800"/>
<path d="M627.400 36.600H646.600Q647.600 36.600 647.600 37.600V56.600L642.600 61.400H627.400Z" fill="url(#gClip)" stroke="#8f8f8f" stroke-width="0.800"/>
<path d="M631 43.600h13M631 46.200h13M631 48.800h13M631 51.400h9" stroke="#b2b2b2" stroke-width="0.900"/>
<path d="M642.600 61.400V56.600H647.600Z" fill="#bdbdbd" stroke="#8f8f8f" stroke-width="0.600"/>
<path d="M619.600 57.200h5.400M622.300 54.500v5.400" stroke="#000" stroke-width="1.200"/>
<!-- paste -->
<rect x="665.600" y="33" width="26.200" height="27.200" rx="1.2" fill="#c58636" stroke="#8f5c20" stroke-width="0.8"/>
<path d="M668.4 35.600H689V54.4L684.6 58H668.4Z" fill="url(#gClip)" stroke="#b9b9b9" stroke-width="0.5"/>
<rect x="672.600" y="30.400" width="12.200" height="5.400" rx="1.400" fill="#9b9b93" stroke="#6e6e66" stroke-width="0.7"/>
<path d="M671.4 40h14.200M671.4 42.600h14.200M671.4 45.200h14.200M671.4 47.800h14.200M671.4 50.400h8" stroke="#b4b4b4" stroke-width="0.9"/>
<path d="M684.2 58.200V54H689.200Z" fill="#8a8a8a"/>
</svg>
<span class="t" style="left:303px;top:44.800px;width:30px;text-align:center;font-size:14.600px;line-height:15px;font-weight:bold;color:#fff;transform:scaleX(0.660);will-change:transform;letter-spacing:-0.200px;">SVG</span>

<svg style="left:715px;top:24px;" width="530" height="46" viewBox="715 24 530 46" fill="none">
<defs>
<linearGradient id="gLens" x1="0" y1="0" x2="0" y2="1"><stop offset="0" stop-color="#b4cdee"/><stop offset="0.49" stop-color="#8fb4e6"/><stop offset="0.51" stop-color="#5d96db"/><stop offset="1" stop-color="#80b8f4"/></linearGradient>
<linearGradient id="gRedPen" x1="0" y1="0" x2="1" y2="1"><stop offset="0" stop-color="#a80c0c"/><stop offset="0.45" stop-color="#f23a2c"/><stop offset="1" stop-color="#b81208"/></linearGradient>
<radialGradient id="gSh"><stop offset="0" stop-color="#777" stop-opacity="0.55"/><stop offset="1" stop-color="#777" stop-opacity="0"/></radialGradient>
<g id="mag">
<ellipse cx="3" cy="15.400" rx="11.500" ry="2.800" fill="url(#gSh)"/>
<path d="M7.400 7.800L10.200 10.400" stroke="#8a8a8a" stroke-width="1.800" stroke-linecap="butt"/>
<path d="M10.200 10.400L16.200 16" stroke="#5c5c5c" stroke-width="3.900" stroke-linecap="round"/>
<path d="M10.800 10L16.400 15.200" stroke="#909090" stroke-width="0.900" stroke-linecap="round"/>
<circle cx="0" cy="0" r="11.400" fill="#efefeb" stroke="#b4b4ac" stroke-width="0.800"/>
<circle cx="0" cy="0" r="9.700" fill="url(#gLens)" stroke="#c4c4bc" stroke-width="0.600"/>
</g>
</defs>
<!-- red pencil w/ underline -->
<path d="M723 56.300H745.400" stroke="#ff1010" stroke-width="1.1"/>
<path d="M724.200 55.600L726.400 49.200L738.600 36Q739.800 34.800 741.200 35.800L743.600 37.800Q744.800 39 743.800 40.200L731.200 53.400Z" fill="url(#gRedPen)" stroke="#7a1a0a" stroke-width="0.8" stroke-linejoin="round"/>
<path d="M724.200 55.600L726.400 49.200L731.200 53.400Z" fill="#f0d6a8" stroke="#7a4a1a" stroke-width="0.6"/>
<path d="M724.200 55.600L725 53.200L726.400 54.600Z" fill="#222"/>
<path d="M736.800 38L741.800 42.400" stroke="#d9d9d9" stroke-width="1.500"/>
<!-- blue rect -->
<rect x="765.600" y="35.600" width="28.600" height="21.600" fill="#00007c" stroke="#1a1a5a" stroke-width="0.8"/>
<path d="M768.800 54.200L790.800 39.200V54.200Z" stroke="#fff" stroke-width="1.100" stroke-dasharray="2.400 1.200"/>
<path d="M768.800 54.200L790.800 39.200" stroke="#fff" stroke-width="1.200" stroke-dasharray="3.200 0.900"/>
<!-- circle w/ blue line -->
<circle cx="826" cy="46" r="12.800" stroke="#000" stroke-width="2.200" shape-rendering="crispEdges"/>
<path d="M812.300 59.600L839.700 32" stroke="#1010ff" stroke-width="1.100"/>
<!-- grid dots -->
<path d="M869.800 33h2v2h-2zM877.900 33h2v2h-2zM885.900 33h2v2h-2zM894 33h2v2h-2zM869.800 41h2v2h-2zM877.900 41h2v2h-2zM885.900 41h2v2h-2zM894 41h2v2h-2zM869.800 49h2v2h-2zM877.900 49h2v2h-2zM885.900 49h2v2h-2zM894 49h2v2h-2zM869.800 57h2v2h-2zM877.900 57h2v2h-2zM885.900 57h2v2h-2zM894 57h2v2h-2z" fill="#000"/>
<!-- zoom in -->
<use href="#mag" x="936.2" y="42"/>
<path d="M930.500 40.600H934.600V36.300H937.800V40.600H941.900V43.400H937.800V47.500H934.600V43.400H930.500Z" fill="#fff" stroke="#3f77c4" stroke-width="0.7"/>
<!-- zoom out -->
<use href="#mag" x="982.3" y="42"/>
<rect x="976.400" y="40.600" width="11.600" height="2.800" fill="#fff" stroke="#3f77c4" stroke-width="0.7"/>
<!-- zoom fit -->
<use href="#mag" x="1028.2" y="42"/>
<rect x="1025.400" y="39.200" width="5.600" height="5.600" fill="#a9c8ee"/>
<path d="M1021.9 40.8V35.8H1026.9V38.3H1024.4V40.8ZM1034.5 40.8V35.8H1029.5V38.3H1032.0V40.8ZM1021.9 43.2V48.2H1026.9V45.7H1024.4V43.2ZM1034.5 43.2V48.2H1029.5V45.7H1032.0V43.2Z" fill="#fff" stroke="#4a80cc" stroke-width="0.3"/>
<!-- zoom selection -->
<use href="#mag" x="1074" y="42"/>
<rect x="1071.200" y="39.200" width="5.600" height="5.600" fill="#a9c8ee"/>
<path d="M1067.7 40.8V35.8H1072.7V38.3H1070.2V40.8ZM1080.3 40.8V35.8H1075.3V38.3H1077.8V40.8ZM1067.7 43.2V48.2H1072.7V45.7H1070.2V43.2ZM1080.3 43.2V48.2H1075.3V45.7H1077.8V43.2Z" fill="#ff0505"/>
<!-- zoom prev -->
<use href="#mag" x="1120.400" y="42"/>
<path d="M1113.200 42L1120.800 36.200V39.600H1127.600V44.400H1120.800V47.800Z" fill="#fff" stroke="#3f77c4" stroke-width="0.7" stroke-linejoin="round"/>
<!-- window zoom -->
<rect x="1154.300" y="30.400" width="27.400" height="18.200" rx="1.500" fill="#fff" stroke="#6a94d4" stroke-width="1"/>
<g transform="translate(1168.500 44.700) scale(0.860)"><use href="#mag"/></g>
<!-- pan zoom -->
<use href="#mag" x="1213.100" y="43.200"/>
<path d="M1213.100 30.200L1216.700 34.600H1214.500V41.800H1221.700V39.600L1226.100 43.200L1221.700 46.800V44.600H1214.500V51.800H1216.700L1213.100 56.200L1209.500 51.800H1211.700V44.600H1204.500V46.800L1200.100 43.200L1204.500 39.600V41.800H1211.700V34.600H1209.500Z" fill="#fff" stroke="#3f77c4" stroke-width="0.8" stroke-linejoin="round"/>
<rect x="1211.700" y="41.800" width="2.800" height="2.800" fill="#8fb6e8"/>
</svg>

<!-- click highlight ring + mouse cursor -->
<svg style="left:1295px;top:162px;" width="88" height="88" viewBox="1295 162 88 88">
<defs><radialGradient id="rg1" cx="0.5" cy="0.5" r="0.5"><stop offset="0" stop-color="#fff" stop-opacity="0"/><stop offset="0.7" stop-color="#fff" stop-opacity="0.03"/><stop offset="0.92" stop-color="#fff" stop-opacity="0.3"/><stop offset="1" stop-color="#fff" stop-opacity="0.35"/></radialGradient></defs>
<circle cx="1338.5" cy="205.8" r="34" fill="url(#rg1)"/>
<circle cx="1338.5" cy="205.8" r="36" fill="none" stroke="#5f86ab" stroke-opacity="0.28" stroke-width="5.6"/>
<circle cx="1338.5" cy="205.8" r="36" fill="none" stroke="#5f86ab" stroke-opacity="0.22" stroke-width="3.2"/>
<circle cx="1338.5" cy="205.8" r="36.2" fill="none" stroke="#6f93b5" stroke-opacity="0.25" stroke-width="1.4"/>
<path d="M1338.3 205.9 L1338.3 227.5 L1343.7 222.5 L1348.5 232.3 L1351.7 230.7 L1347.4 221.2 L1353 220.9 Z" fill="#fff" stroke="#fff" stroke-width="2.6" stroke-linejoin="round" stroke-opacity="0.8"/>
<path d="M1338.3 205.9 L1338.3 227.5 L1343.7 222.5 L1348.5 232.3 L1351.7 230.7 L1347.4 221.2 L1353 220.9 Z" fill="#fff" stroke="#000" stroke-width="1.25" stroke-linejoin="miter"/>
</svg>


<div id="texts">
<span id="t0" class="t" style="left:14.5px;top:2.25px;font-size:14px;line-height:19.6px;letter-spacing:-0.516px;-webkit-text-stroke:0.25px;">File</span>
<span id="t1" class="t" style="left:49px;top:2.25px;font-size:14px;line-height:19.6px;letter-spacing:-0.031px;-webkit-text-stroke:0.25px;">Edit</span>
<span id="t2" class="t" style="left:85.5px;top:2.25px;font-size:14px;line-height:19.6px;letter-spacing:-0.023px;-webkit-text-stroke:0.25px;">View</span>
<span id="t3" class="t" style="left:128.5px;top:2.25px;font-size:14px;line-height:19.6px;letter-spacing:-0.237px;-webkit-text-stroke:0.25px;">Select</span>
<span id="t4" class="t" style="left:180.5px;top:2.25px;font-size:14px;line-height:19.6px;letter-spacing:-0.043px;-webkit-text-stroke:0.25px;">Draw</span>
<span id="t5" class="t" style="left:225.5px;top:2.25px;font-size:14px;line-height:19.6px;letter-spacing:0.04px;-webkit-text-stroke:0.25px;">Dimension</span>
<span id="t6" class="t" style="left:304.5px;top:2.25px;font-size:14px;line-height:19.6px;letter-spacing:0.294px;-webkit-text-stroke:0.25px;">Modify</span>
<span id="t7" class="t" style="left:360.5px;top:2.25px;font-size:14px;line-height:19.6px;letter-spacing:-0.551px;-webkit-text-stroke:0.25px;">Snap</span>
<span id="t8" class="t" style="left:405px;top:2.25px;font-size:14px;line-height:19.6px;letter-spacing:-0.09px;-webkit-text-stroke:0.25px;">Info</span>
<span id="t9" class="t" style="left:441px;top:2.25px;font-size:14px;line-height:19.6px;letter-spacing:-0.206px;-webkit-text-stroke:0.25px;">Layer</span>
<span id="t10" class="t" style="left:488px;top:2.25px;font-size:14px;line-height:19.6px;letter-spacing:0.053px;-webkit-text-stroke:0.25px;">Block</span>
<span id="t11" class="t" style="left:535px;top:2.25px;font-size:14px;line-height:19.6px;letter-spacing:0.117px;-webkit-text-stroke:0.25px;">Window</span>
<span id="t12" class="t" style="left:598px;top:2.25px;font-size:14px;line-height:19.6px;letter-spacing:-0.07px;-webkit-text-stroke:0.25px;">Misc</span>
<span id="t13" class="t" style="left:640.5px;top:2.25px;font-size:14px;line-height:19.6px;letter-spacing:0.051px;-webkit-text-stroke:0.25px;">Help</span>
<span id="t14" class="t" style="left:593.2px;top:113.06px;font-size:11.1px;line-height:15.54px;letter-spacing:0.277px;">* Untitled 1</span>
<span id="t15" class="t" style="left:1282.8px;top:111.1px;font-size:12px;line-height:16.8px;letter-spacing:-0.03px;">Property Editor</span>
<span id="t16" class="t" style="left:1169px;top:145.76px;font-size:13.5px;line-height:18.9px;letter-spacing:-0.06px;">Selection:</span>
<span id="t17" class="t" style="left:1240px;top:146.06px;font-size:13.5px;line-height:18.9px;letter-spacing:-0.2px;">Line [1]</span>
<span id="t18" class="t" style="left:1175.3px;top:168.81px;font-size:11.5px;line-height:16.1px;letter-spacing:0.082px;">General Properties</span>
<span id="t19" class="t" style="left:1175.4px;top:372.51px;font-size:11.5px;line-height:16.1px;letter-spacing:0.217px;">Specific Properties</span>
<span id="t20" class="t" style="left:1175.2px;top:604.41px;font-size:11.5px;line-height:16.1px;letter-spacing:0.079px;">Custom</span>
<span id="t21" class="t" style="left:1232.7px;top:197.56px;font-size:13.5px;line-height:18.9px;letter-spacing:-0.239px;">Layer:</span>
<span id="t22" class="t" style="left:1233px;top:223.56px;font-size:13.5px;line-height:18.9px;letter-spacing:-0.036px;">Color:</span>
<span id="t23" class="t" style="left:1200.3px;top:247.56px;font-size:13.5px;line-height:18.9px;letter-spacing:0.017px;">Lineweight:</span>
<span id="t24" class="t" style="left:1214.2px;top:271.56px;font-size:13.5px;line-height:18.9px;letter-spacing:-0.022px;">Linetype:</span>
<span id="t25" class="t" style="left:1178px;top:295.76px;font-size:13.5px;line-height:18.9px;letter-spacing:-0.101px;">Linetype Scale:</span>
<span id="t26" class="t" style="left:1196.4px;top:318.76px;font-size:13.5px;line-height:18.9px;letter-spacing:-0.101px;">Draw Order:</span>
<span id="t27" class="t" style="left:1223.4px;top:341.76px;font-size:13.5px;line-height:18.9px;letter-spacing:-0.164px;">Handle:</span>
<span id="t28" class="t" style="left:1209.6px;top:399.26px;font-size:13.5px;line-height:18.9px;letter-spacing:-0.007px;">Length:</span>
<span id="t29" class="t" style="left:1178.4px;top:422.26px;font-size:13.5px;line-height:18.9px;letter-spacing:-0.086px;">Total Length:</span>
<span id="t30" class="t" style="left:1217.6px;top:445.26px;font-size:13.5px;line-height:18.9px;letter-spacing:-0.214px;">Angle:</span>
<span id="t31" class="t" style="left:1243px;top:486.26px;font-size:13.5px;line-height:18.9px;letter-spacing:-0.583px;">X:</span>
<span id="t32" class="t" style="left:1243px;top:509.26px;font-size:13.5px;line-height:18.9px;letter-spacing:-0.208px;">Y:</span>
<span id="t33" class="t" style="left:1243px;top:550.26px;font-size:13.5px;line-height:18.9px;letter-spacing:-0.583px;">X:</span>
<span id="t34" class="t" style="left:1243px;top:573.26px;font-size:13.5px;line-height:18.9px;letter-spacing:-0.208px;">Y:</span>
<span id="t35" class="t" style="left:1176.8px;top:465.96px;font-size:13.5px;line-height:18.9px;letter-spacing:-0.042px;font-weight:bold;">Start Point</span>
<span id="t36" class="t" style="left:1176.8px;top:529.96px;font-size:13.5px;line-height:18.9px;letter-spacing:-0.356px;font-weight:bold;">End Point</span>
<span id="t37" class="t" style="left:1297.5px;top:197.96px;font-size:13.5px;line-height:18.9px;letter-spacing:0px;color:#5a4a4a;">0</span>
<span id="t38" class="t" style="left:1297.7px;top:223.56px;font-size:13.5px;line-height:18.9px;letter-spacing:-0.41px;">By Layer</span>
<span id="t39" class="t" style="left:1297.7px;top:247.56px;font-size:13.5px;line-height:18.9px;letter-spacing:-0.41px;">By Layer</span>
<span id="t40" class="t" style="left:1275.5px;top:270.86px;font-size:13.5px;line-height:18.9px;letter-spacing:-0.41px;">By Layer</span>
<span id="t41" class="t" style="left:1273.3px;top:295.66px;font-size:13.5px;line-height:18.9px;letter-spacing:0px;">1</span>
<span id="t42" class="t" style="left:1273.3px;top:318.66px;font-size:13.5px;line-height:18.9px;letter-spacing:0px;">0</span>
<span id="t43" class="t" style="left:1273.3px;top:341.66px;font-size:13.5px;line-height:18.9px;letter-spacing:0.18px;color:#b9b9b9;">0x39</span>
<span id="t44" class="t" style="left:1259.4px;top:399.06px;font-size:13.5px;line-height:18.9px;letter-spacing:0.16px;">58.30951895</span>
<span id="t45" class="t" style="left:1259.4px;top:422.06px;font-size:13.5px;line-height:18.9px;letter-spacing:0.16px;color:#b9b9b9;">58.30951895</span>
<span id="t46" class="t" style="left:1259.4px;top:445.06px;font-size:13.5px;line-height:18.9px;letter-spacing:0.296px;">30.96375653</span>
<span id="t47" class="t" style="left:1259.4px;top:486.06px;font-size:13.5px;line-height:18.9px;letter-spacing:-0.016px;">20</span>
<span id="t48" class="t" style="left:1259.4px;top:509.06px;font-size:13.5px;line-height:18.9px;letter-spacing:-0.016px;">20</span>
<span id="t49" class="t" style="left:1259.4px;top:550.06px;font-size:13.5px;line-height:18.9px;letter-spacing:-0.216px;">70</span>
<span id="t50" class="t" style="left:1259.4px;top:573.06px;font-size:13.5px;line-height:18.9px;letter-spacing:-0.016px;">50</span>
<span id="t51" class="t" style="left:77px;top:749.06px;font-size:13.5px;line-height:18.9px;letter-spacing:-0.379px;font-style:italic;color:#0000dd;">Command:</span>
<span id="t52" class="t" style="left:145.8px;top:749.06px;font-size:13.5px;line-height:18.9px;letter-spacing:-0.254px;color:#0000dd;">line</span>
<span id="t53" class="t" style="left:73px;top:776.89px;font-size:13.3px;line-height:18.62px;letter-spacing:-0.054px;">Command:</span>
<span id="t54" class="t" style="left:1083.6px;top:732.3px;font-size:12.8px;line-height:17.92px;letter-spacing:-0.046px;">10 &lt; 100</span>
<span id="t55" class="t" style="left:2px;top:806.59px;font-size:10.1px;line-height:14.14px;letter-spacing:-0.252px;">161.6,77.4</span>
<span id="t56" class="t" style="left:2px;top:827.19px;font-size:10.1px;line-height:14.14px;letter-spacing:-0.274px;">@91.6,27.4</span>
<span id="t57" class="t" style="left:256px;top:806.59px;font-size:10.1px;line-height:14.14px;letter-spacing:-0.064px;">179.1796&lt;26°</span>
<span id="t58" class="t" style="left:256px;top:827.19px;font-size:10.1px;line-height:14.14px;letter-spacing:-0.117px;">@95.6103&lt;17°</span>
<span id="t59" class="t" style="left:598px;top:810.79px;font-size:10.1px;line-height:14.14px;letter-spacing:0.12px;">Select entity or region</span>
<span id="t60" class="t" style="left:588px;top:821.99px;font-size:10.1px;line-height:14.14px;letter-spacing:0.065px;">Move entity or reference</span>
<span id="t61" class="t" style="left:949px;top:810.79px;font-size:10.1px;line-height:14.14px;letter-spacing:0.09px;">Selected entities:</span>
<span id="t62" class="t" style="left:949px;top:821.99px;font-size:10.1px;line-height:14.14px;letter-spacing:0.026px;">1 Line on Layer "0".</span>
</div>
</body></html>
